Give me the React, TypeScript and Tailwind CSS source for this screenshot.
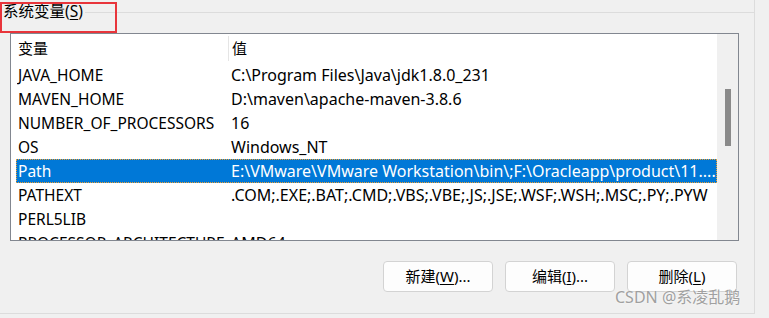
const FONT = '"Noto Sans", "Noto Sans CJK SC", sans-serif'

const ROWS: [string, string][] = [
  ["JAVA_HOME", "C:\\Program Files\\Java\\jdk1.8.0_231"],
  ["MAVEN_HOME", "D:\\maven\\apache-maven-3.8.6"],
  ["NUMBER_OF_PROCESSORS", "16"],
  ["OS", "Windows_NT"],
  ["Path", "E:\\VMware\\VMware Workstation\\bin\\;F:\\Oracleapp\\product\\11...."],
  ["PATHEXT", ".COM;.EXE;.BAT;.CMD;.VBS;.VBE;.JS;.JSE;.WSF;.WSH;.MSC;.PY;.PYW"],
  ["PERL5LIB", ""],
  ["PROCESSOR_ARCHITECTURE", "AMD64"],
]

function Btn({ pre, key_, post }: { pre: string; key_: string; post: string }) {
  return (
    <button className="w-[110px] h-[31px] rounded-[4px] border border-[#d3d3d3] bg-[#fdfdfd] text-[15px] text-black flex items-center justify-center">
      {pre}(<span className="underline underline-offset-2">{key_}</span>){post}
    </button>
  )
}

export default function App() {
  return (
    <div className="w-[769px] h-[318px] bg-[#f0f0f0] relative overflow-hidden text-black" style={{ fontFamily: FONT }}>
      {/* group box */}
      <div className="w-[755px] h-[314px] border-r border-b border-[#dcdcdc] flex flex-col">
        <div className="flex items-center h-[24px] pl-[3px]">
          <span className="text-[15.5px] leading-none">系统变量(<span className="underline underline-offset-2">S</span>)</span>
          <div className="flex-1 h-px bg-[#dcdcdc] ml-[2px]" />
        </div>

        {/* list view */}
        <div className="ml-[10px] mt-[9px] w-[729px] h-[208px] border border-[#828790] bg-white flex">
          <div className="flex-1 flex flex-col overflow-hidden">
            <div className="h-[29px] flex items-center text-[15px] shrink-0">
              <div className="w-[217px] pl-[7px]">变量</div>
              <div className="w-px h-[25px] bg-[#e5e5e5]" />
              <div className="pl-[3px]">值</div>
            </div>
            {ROWS.map(([name, value]) => {
              const sel = name === "Path"
              return (
                <div
                  key={name}
                  className={`ml-[5px] h-[24px] shrink-0 flex items-center whitespace-nowrap leading-[20px] ${sel ? "bg-[#0078d7] text-white border border-dotted border-[#f0a030]" : "border border-transparent"}`}
                >
                  <div className="w-[214px] pl-[1px] text-[15.5px] overflow-hidden">{name}</div>
                  <div className="text-[16px]">{value}</div>
                </div>
              )
            })}
          </div>
          <div className="w-[21px] bg-[#f0f0f0] flex flex-col items-center pt-[2px] shrink-0">
            <div className="w-[6px] h-[57px] mt-[53px] bg-[#8a8a8a]" />
          </div>
        </div>

        <div className="mt-[20px] flex justify-end gap-[12px] pr-[17px]">
          <Btn pre="新建" key_="W" post="..." />
          <Btn pre="编辑" key_="I" post="..." />
          <Btn pre="删除" key_="L" post="" />
        </div>
      </div>

      {/* annotation */}
      <div className="absolute left-0 top-[2px] w-[117px] h-[31px] border-[2.5px] border-[#e8353b]" />

      <div className="absolute left-[615px] top-[289px] text-[16px] text-[#a0a0a0] leading-none whitespace-nowrap" style={{ textShadow: "0 0 2px #fff" }}>
        CSDN @系凌乱鹅
      </div>
    </div>
  )
}
